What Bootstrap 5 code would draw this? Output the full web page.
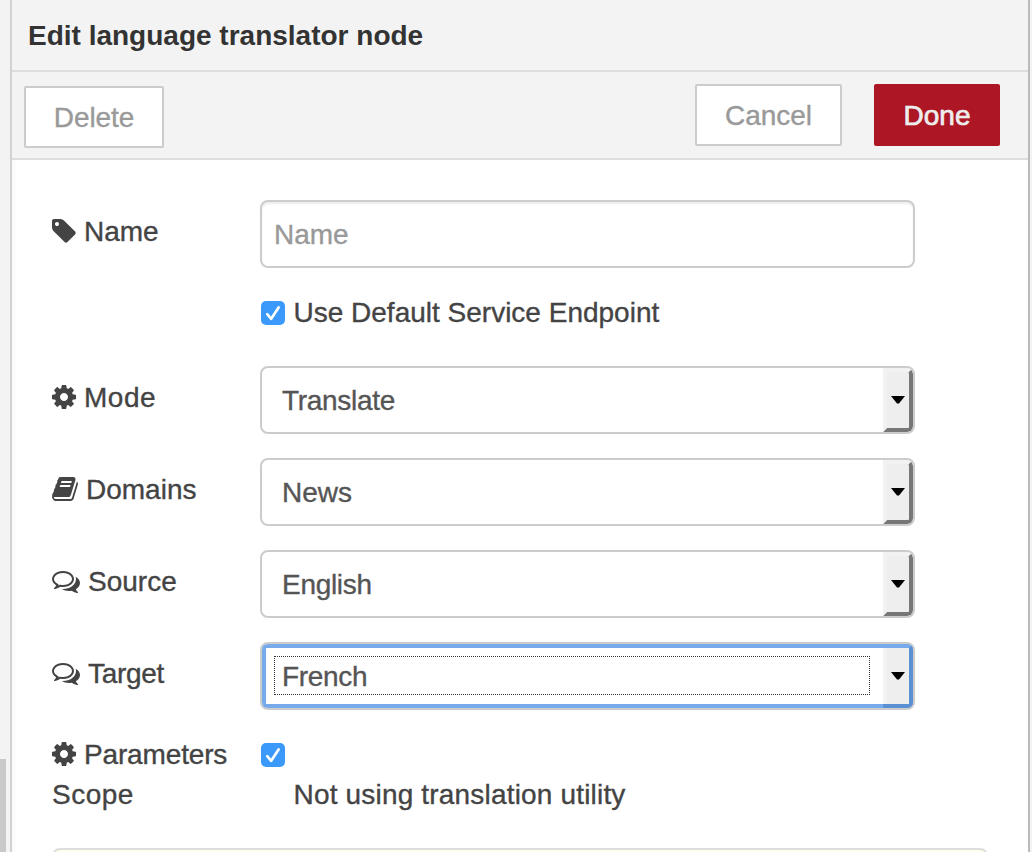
<!DOCTYPE html>
<html lang="en">
<head>
<meta charset="utf-8">
<meta name="viewport" content="width=device-width, initial-scale=1">
<title>Edit language translator node</title>
<link href="https://cdn.jsdelivr.net/npm/bootstrap@5.3.0/dist/css/bootstrap.min.css" rel="stylesheet">
<script src="https://cdn.jsdelivr.net/npm/bootstrap@5.3.0/dist/js/bootstrap.bundle.min.js" defer></script>
<style>
body{font-family:"Liberation Sans",Arial,sans-serif;font-size:28px;line-height:40px;color:#444;background:#f3f3f3;-webkit-text-stroke:.35px}
.shell{height:852px}
.gutter{width:10px}
.thumb{width:6px;height:93px;background:#c9c9c9}
.tray{border-left:2px solid #d2d2d2;border-right:2px solid #bbb;margin-right:2px;background:linear-gradient(90deg,#fafafa,#fff 6px);min-width:0}
.tray-head{height:72px;padding:2px 16px 0;border-bottom:2px solid #ddd;background:#f3f3f3;font-weight:700;color:#333;-webkit-text-stroke:0}
.tray-tools{height:88px;padding:12px 28px 0 12px;border-bottom:2px solid #ddd;background:#f3f3f3}
.tool{--bs-btn-font-size:28px;--bs-btn-line-height:40px;--bs-btn-border-radius:2px;--bs-btn-bg:#fff;--bs-btn-color:#999;--bs-btn-border-color:#ccc;--bs-btn-border-width:2px;--bs-btn-padding-x:0;height:62px;padding-top:10px;padding-bottom:8px}
.tool-del{width:140px;margin-top:2px;letter-spacing:-.1px}
.tool-cancel{width:147px;margin-right:32px}
.tool-done{width:126px;--bs-btn-bg:#ad1625;--bs-btn-border-color:#ad1625;--bs-btn-color:#eee;-webkit-text-stroke:.7px}
.form-area{padding:40px 40px 0}
.line{height:68px;margin-bottom:24px}
.lbl{width:208px;flex:none;padding-top:12px;white-space:nowrap}
.ico{width:28px;height:28px;fill:currentColor;stroke:none;flex:none;margin-top:5px}
.i-cog{margin-left:-2px;margin-right:6px}
.i-book{margin-left:-1px;margin-right:7px}
.i-talk{margin-right:8px}
.ctl{width:655px;height:68px;border:2px solid #ccc;border-radius:8px;background:#fff;color:#555;font-size:28px}
.ctl.form-control{padding:2px 12px 0;box-shadow:inset 0 2px 2px rgba(0,0,0,.075)}
.ctl.form-control::placeholder{color:#999;opacity:1}
.pick{padding-left:20px;overflow:hidden}
.val{padding-top:2px}
.arrow{width:30px;height:64px;background:#eee;border:4px solid #f2f2f2;border-right-color:#777;border-bottom-color:#777;border-radius:0 6px 5px 0}
.arrow svg{width:14px;height:8px;margin-right:1px}
.pick-on{padding:0}
.inner{width:100%;height:64px;border:4px solid #77aaeb;border-right-color:#5b91d3;border-radius:3px;padding-left:8px}
.dots{width:596px;height:39px;margin-bottom:1px;border:1px dotted #333;padding:1px 0 0 7px;line-height:38px}
.pick-on .arrow{height:64px;margin-right:-4px;background:linear-gradient(90deg,#f4f4f4 4px,#eee 4px);border-left:0;border-color:#77aaeb #5b91d3 #5b91d3;border-radius:0 3px 3px 0}
.pick-on .arrow svg{margin-left:5px}
.box{width:24px;height:24px;border-radius:5px;background:#3b99fc;flex:none}
.endpoint{margin:25px 0 33px 209px;height:40px}
.t-end{margin-left:8.5px}
.scope{height:114px;padding-top:1px}
.scope-lbl{width:209px;letter-spacing:-.15px}
.scope-box{margin-top:8px}
.scope-note{margin:8px 0 0 32.5px;letter-spacing:.18px}
.notes{height:40px;border:2px solid #ddd;border-radius:8px;background:#ffffef;width:936px}
.tight{letter-spacing:-.3px}
.loose{letter-spacing:.5px}
</style>
</head>
<body class="overflow-hidden">
<svg class="d-none">
<symbol id="tag" viewBox="0 0 1792 1792"><path d="M576 448q0-53-37.5-90.5t-90.5-37.5-90.5 37.5-37.5 90.5 37.5 90.5 90.5 37.5 90.5-37.5 37.5-90.5zm1067 576q0 53-37 90l-491 492q-39 37-91 37-53 0-90-37l-715-716q-38-37-64.5-101t-26.5-117v-416q0-52 38-90t90-38h416q53 0 117 26.5t102 64.5l715 714q37 39 37 91z"/></symbol>
<symbol id="cog" viewBox="0 0 1792 1792"><path d="M1152 896q0-106-75-181t-181-75-181 75-75 181 75 181 181 75 181-75 75-181zm512-109v222q0 12-8 23t-20 13l-185 28q-19 54-39 91 35 50 107 138 10 12 10 25t-9 23q-27 37-99 108t-94 71q-12 0-26-9l-138-108q-44 23-91 38-16 136-29 186-7 28-36 28h-222q-14 0-24.5-8.5t-11.5-21.5l-28-184q-49-16-90-37l-141 107q-10 9-25 9-14 0-25-11-126-114-165-168-7-10-7-23 0-12 8-23 15-21 51-66.5t54-70.5q-27-50-41-99l-183-27q-13-2-21-12.5t-8-23.5v-222q0-12 8-23t19-13l186-28q14-46 39-92-40-57-107-138-10-12-10-24 0-10 9-23 26-36 98.5-107.5t94.5-71.5q13 0 26 10l138 107q44-23 91-38 16-136 29-186 7-28 36-28h222q14 0 24.5 8.5t11.5 21.5l28 184q49 16 90 37l142-107q9-9 24-9 13 0 25 10 129 119 165 170 7 8 7 22 0 12-8 23-15 21-51 66.5t-54 70.5q26 50 41 98l183 28q13 2 21 12.5t8 23.5z"/></symbol>
<symbol id="book" viewBox="0 0 1792 1792"><path d="M1703 478q40 57 18 129l-275 906q-19 64-76.5 107.5t-122.5 43.5h-923q-77 0-148.5-53.5t-99.5-131.5q-24-67-2-127 0-4 3-27t4-37q1-8-3-21.5t-3-19.5q2-11 8-21t16.5-23.5 16.5-23.5q23-38 45-91.5t30-91.5q3-10 .5-30t-.5-28q3-11 17-28t17-23q21-36 42-92t25-90q1-9-2.5-32t.5-28q4-13 22-30.5t22-22.5q19-26 42.5-84.5t27.5-96.5q1-8-3-25.5t-2-26.5q2-8 9-18t18-23 17-21q8-12 16.5-30.5t15-35 16-36 19.5-32 26.5-23.5 36-11.5 47.5 5.5l-1 3q38-9 51-9h761q74 0 114 56t18 130l-274 906q-36 119-71.5 153.5t-128.5 34.5h-869q-27 0-38 15-11 16-1 43 24 70 144 70h923q29 0 56-15.5t35-41.5l300-987q7-22 5-57 38 15 59 43zm-1064 2q-4 13 2 22.5t20 9.5h608q13 0 25.5-9.5t16.5-22.5l21-64q4-13-2-22.5t-20-9.5h-608q-13 0-25.5 9.5t-16.5 22.5zm-83 256q-4 13 2 22.5t20 9.5h608q13 0 25.5-9.5t16.5-22.5l21-64q4-13-2-22.5t-20-9.5h-608q-13 0-25.5 9.5t-16.5 22.5z"/></symbol>
<symbol id="talk" viewBox="0 0 1792 1792"><path d="M704 384q-153 0-286 52t-211.5 141-78.5 191q0 82 53 158t149 132l97 56-35 84q34-20 62-39l44-31 53 10q78 14 153 14 153 0 286-52t211.5-141 78.5-191-78.5-191-211.5-141-286-52zm0-128q191 0 353.5 68.5t256.5 186.5 94 257-94 257-256.5 186.5-353.5 68.5q-86 0-176-16-124 88-278 128-36 9-86 16h-3q-11 0-20.5-8t-11.5-21q-1-3-1-6.5t.5-6.5 2-6l2.5-5 3.5-5.5 4-5 4.5-5 4-4.5q5-6 23-25t26-29.5 22.5-29 25-38.5 20.5-44q-124-72-195-177t-71-224q0-139 94-257t256.5-186.5 353.5-68.5zm822 1169q10 24 20.5 44t25 38.5 22.5 29 26 29.5 23 25q1 1 4 4.5t4.5 5 4 5 3.5 5.5l2.5 5 2 6 .5 6.5-1 6.5q-3 14-13 22t-22 7q-50-7-86-16-154-40-278-128-90 16-176 16-271 0-472-132 58 4 88 4 161 0 309-45t264-129q125-92 192-212t67-254q0-77-23-152 129 71 204 178t75 230q0 120-71 224.5t-195 176.5z"/></symbol>
<symbol id="down" viewBox="0 0 14 8"><path d="M0 0h14L8 7.5H6z" stroke="none"/></symbol>
<symbol id="tick" viewBox="0 0 24 24"><path d="M6.2 13.2l4 4.6L17.6 6.5" fill="none" stroke="#fff" stroke-width="2.7" stroke-linecap="round" stroke-linejoin="round"/></symbol>
</svg>
<div class="shell d-flex">
  <div class="gutter d-flex flex-column justify-content-end"><div class="thumb"></div></div>
  <main class="tray flex-grow-1">
    <header class="tray-head d-flex align-items-center"><span>Edit language translator node</span></header>
    <div class="tray-tools d-flex align-items-start">
      <button type="button" class="btn tool tool-del me-auto">Delete</button>
      <button type="button" class="btn tool tool-cancel">Cancel</button>
      <button type="button" class="btn tool tool-done">Done</button>
    </div>
    <form class="form-area">
      <div class="line d-flex mb-0">
        <label class="lbl d-flex"><svg class="ico i-cog"><use href="#tag"/></svg><span>Name</span></label>
        <input class="form-control ctl" placeholder="Name">
      </div>
      <div class="endpoint d-flex align-items-center"><span class="box d-flex"><svg width="24" height="24"><use href="#tick"/></svg></span><span class="t-end">Use Default Service Endpoint</span></div>
      <div class="line d-flex">
        <label class="lbl d-flex"><svg class="ico i-cog"><use href="#cog"/></svg><span class="loose">Mode</span></label>
        <div class="ctl pick d-flex align-items-center justify-content-between"><span class="val tight">Translate</span><span class="arrow d-flex align-items-center justify-content-center"><svg><use href="#down"/></svg></span></div>
      </div>
      <div class="line d-flex">
        <label class="lbl d-flex"><svg class="ico i-book"><use href="#book"/></svg><span>Domains</span></label>
        <div class="ctl pick d-flex align-items-center justify-content-between"><span class="val">News</span><span class="arrow d-flex align-items-center justify-content-center"><svg><use href="#down"/></svg></span></div>
      </div>
      <div class="line d-flex">
        <label class="lbl d-flex"><svg class="ico i-talk"><use href="#talk"/></svg><span>Source</span></label>
        <div class="ctl pick d-flex align-items-center justify-content-between"><span class="val tight">English</span><span class="arrow d-flex align-items-center justify-content-center"><svg><use href="#down"/></svg></span></div>
      </div>
      <div class="line d-flex">
        <label class="lbl d-flex"><svg class="ico i-talk"><use href="#talk"/></svg><span class="tight">Target</span></label>
        <div class="ctl pick pick-on"><div class="inner d-flex align-items-center justify-content-between"><span class="dots tight">French</span><span class="arrow d-flex align-items-center justify-content-center"><svg><use href="#down"/></svg></span></div></div>
      </div>
      <div class="scope d-flex">
        <div class="scope-lbl"><div class="d-flex"><svg class="ico i-cog"><use href="#cog"/></svg><span>Parameters</span></div><div class="loose">Scope</div></div>
        <div><span class="box d-flex scope-box"><svg width="24" height="24"><use href="#tick"/></svg></span><div class="scope-note">Not using translation utility</div></div>
      </div>
      <div class="notes"></div>
    </form>
  </main>
</div>
</body>
</html>
